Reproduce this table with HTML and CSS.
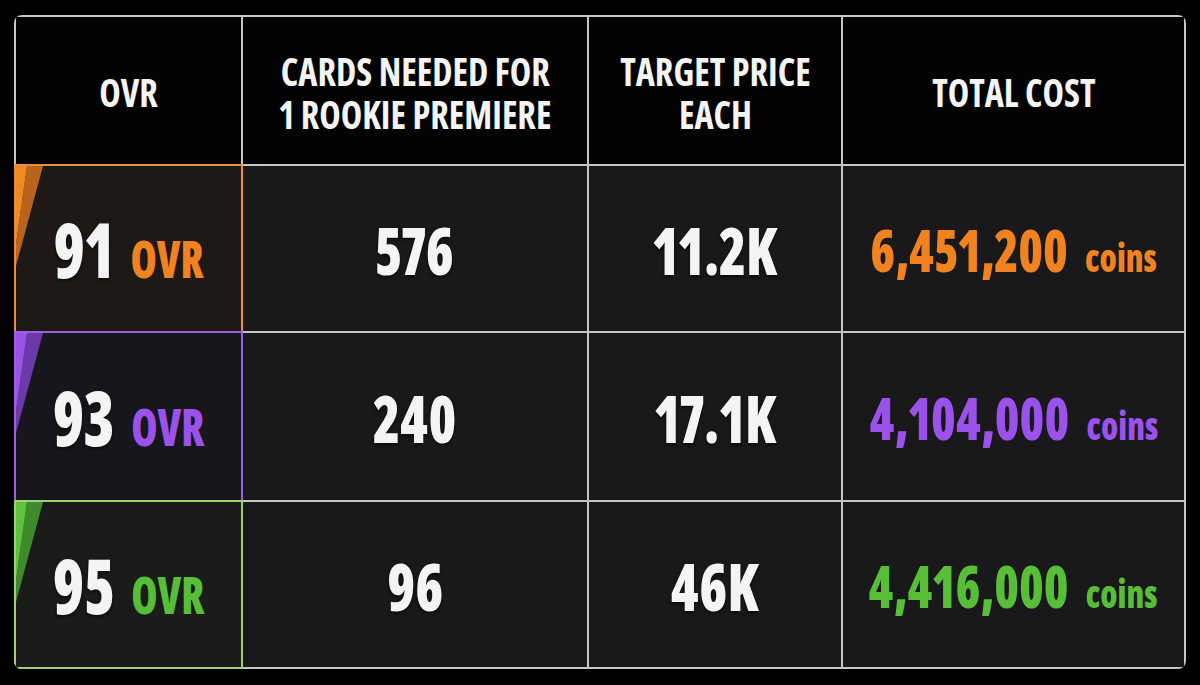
FILE: index.html
```html
<!DOCTYPE html>
<html>
<head>
<meta charset="utf-8">
<link rel="stylesheet" href="styles.css">
</head>
<body>
<div class="table">
  <div class="cell head"><span class="in">OVR</span></div>
  <div class="cell head"><span class="in">CARDS NEEDED FOR<br>1 ROOKIE PREMIERE</span></div>
  <div class="cell head"><span class="in">TARGET PRICE<br>EACH</span></div>
  <div class="cell head"><span class="in">TOTAL COST</span></div>

  <div class="cell tier orange">
    <svg class="accent" viewBox="0 0 30 100" preserveAspectRatio="none"><polygon class="a2" points="11,0 27,0 0,100 0,78"/><polygon class="a1" points="0,0 11,0 0,78"/></svg>
    <span class="in"><span class="num">91</span><span class="ovr">OVR</span></span>
  </div>
  <div class="cell val"><span class="in">576</span></div>
  <div class="cell val"><span class="in">11.2K</span></div>
  <div class="cell total orange"><span class="in"><span class="amt">6,451,200</span><span class="coins">coins</span></span></div>

  <div class="cell tier purple">
    <svg class="accent" viewBox="0 0 30 100" preserveAspectRatio="none"><polygon class="a2" points="11,0 27,0 0,100 0,78"/><polygon class="a1" points="0,0 11,0 0,78"/></svg>
    <span class="in"><span class="num">93</span><span class="ovr">OVR</span></span>
  </div>
  <div class="cell val"><span class="in">240</span></div>
  <div class="cell val"><span class="in">17.1K</span></div>
  <div class="cell total purple"><span class="in"><span class="amt">4,104,000</span><span class="coins">coins</span></span></div>

  <div class="cell tier green">
    <svg class="accent" viewBox="0 0 30 100" preserveAspectRatio="none"><polygon class="a2" points="11,0 27,0 0,100 0,78"/><polygon class="a1" points="0,0 11,0 0,78"/></svg>
    <span class="in"><span class="num">95</span><span class="ovr">OVR</span></span>
  </div>
  <div class="cell val"><span class="in">96</span></div>
  <div class="cell val"><span class="in">46K</span></div>
  <div class="cell total green"><span class="in"><span class="amt">4,416,000</span><span class="coins">coins</span></span></div>
</div>
</body>
</html>
```
FILE: styles.css
```css
html, body {
  margin: 0;
  padding: 0;
  background: #000;
}
body {
  width: 1200px;
  height: 685px;
  overflow: hidden;
  font-family: "Open Sans", "Roboto", sans-serif;
  font-stretch: 75%;
  font-weight: 800;
  font-variant-numeric: proportional-nums;
  color: #f4f4f4;
}
.table {
  margin: 15px 0 0 14px;
  width: 1172px;
  height: 654px;
  box-sizing: border-box;
  padding: 2px;
  background: #c6c6c6;
  border-radius: 8px;
  overflow: hidden;
  display: grid;
  grid-template-columns: 225px 344px 252px 341px;
  grid-template-rows: 147px 165px 167px 165px;
  gap: 2px;
}
.cell {
  background: #19191b;
  display: flex;
  align-items: center;
  justify-content: center;
  text-align: center;
  white-space: nowrap;
}
.in {
  display: inline-block;
  transform: scaleX(0.85);
}
.head {
  background: #030303;
  font-size: 39px;
  font-weight: 700;
  line-height: 43px;
  padding-top: 2px;
  box-sizing: border-box;
}
.head .in {
  transform: scaleX(0.93);
}
.val {
  font-size: 66px;
  text-shadow: 0 2px 4px rgba(0,0,0,0.6);
}
.tier {
  position: relative;
}
.tier .in {
  display: flex;
  align-items: baseline;
  gap: 20px;
  transform: scaleX(0.83);
}
.tier .num {
  font-size: 76px;
  text-shadow: 0 2px 4px rgba(0,0,0,0.6);
}
.tier .ovr {
  font-size: 51px;
}
.accent {
  position: absolute;
  left: 0;
  top: 0;
  width: 30px;
  height: 100px;
}
.tier.orange { background: #1e1916; box-shadow: 0 0 0 2px #e8913c; }
.tier.purple { background: #17161c; box-shadow: 0 0 0 2px #9d5fe0; }
.tier.green { background: #191c18; box-shadow: 0 0 0 2px #9fd07a; }
.orange .ovr, .orange.total { color: #f0821f; }
.purple .ovr, .purple.total { color: #9a52ea; }
.green .ovr, .green.total { color: #58be38; }
.orange .a1 { fill: #f28a24; }
.orange .a2 { fill: #b8641c; }
.purple .a1 { fill: #9a52ea; }
.purple .a2 { fill: #6c3aa8; }
.green .a1 { fill: #5cc43a; }
.green .a2 { fill: #3f8a2a; }
.total .in {
  display: flex;
  align-items: baseline;
  gap: 20px;
  padding-top: 2px;
  transform: scaleX(0.86);
}
.total .amt {
  font-size: 58px;
}
.total .coins {
  font-size: 39px;
}
```
